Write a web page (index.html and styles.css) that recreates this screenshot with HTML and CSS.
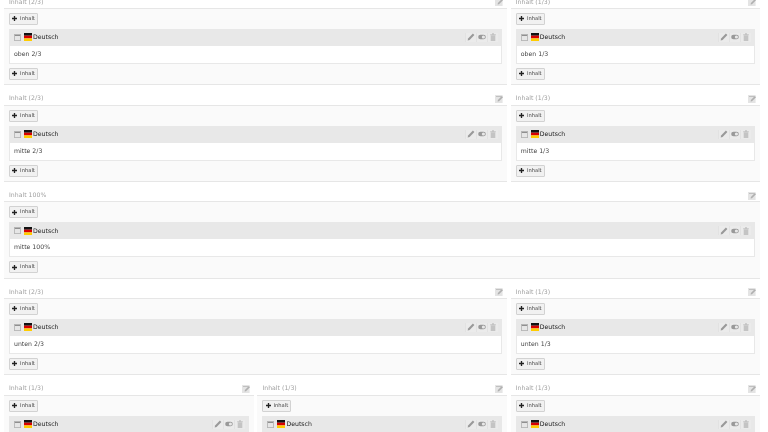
FILE: index.html
```html
<!DOCTYPE html>
<html lang="de">
<head>
    <meta charset="UTF-8">
    <title>Seite</title>
    <link rel="stylesheet" href="styles.css">
</head>
<body>
    <svg class="defs" width="0" height="0">
        <symbol id="i-flag" viewBox="0 0 8 8"><rect width="8" height="2.7" fill="#111"/><rect y="2.7" width="8" height="2.7" fill="#d80000"/><rect y="5.4" width="8" height="2.6" fill="#fc0"/></symbol>
        <symbol id="i-page" viewBox="0 0 8 8"><rect x=".5" y=".5" width="7" height="7" fill="#e6e6e6" stroke="#b5b5b5"/><rect x="1" y="1" width="6" height="1.3" fill="#8f8f8f"/></symbol>
        <symbol id="i-plus" viewBox="0 0 6 6"><path d="M2.2 0h1.6v2.2H6v1.6H3.8V6H2.2V3.8H0V2.2h2.2z" fill="#222"/></symbol>
        <symbol id="i-edit" viewBox="0 0 8 8"><path d="M.6 7.4l.5-2L5.9.6l1.5 1.5-4.8 4.8z" fill="#999"/></symbol>
        <symbol id="i-hide" viewBox="0 0 8 8"><rect x=".2" y="1.7" width="7.6" height="4.6" rx="2.3" fill="#999"/><circle cx="5.4" cy="4" r="1.6" fill="#e8e8e8"/></symbol>
        <symbol id="i-trash" viewBox="0 0 8 8"><path d="M1.2 1.2h5.6v1H1.2zM3 .2h2v1H3zM1.7 2.6h4.6V8H1.7z" fill="#c4c4c4"/></symbol>
        <symbol id="i-col" viewBox="0 0 8 8"><path d="M0 0h7.6v8H0z" fill="#e4e4e4"/><path d="M1 1h5.4v1H1z" fill="#c0c0c0"/><path d="M2.6 6.4l.3-1.3L6.9 1 8 2.2 4 6.2z" fill="#b0b0b0"/></symbol>
    </svg>

    <div class="page">
        <section class="col span-2">
            <header class="col-head"><span>Inhalt (2/3)</span><svg class="col-icon"><use href="#i-col"/></svg></header>
            <div class="panel">
                <button class="add"><svg><use href="#i-plus"/></svg>Inhalt</button>
                <article class="el">
                    <div class="el-head">
                        <svg class="page-icon"><use href="#i-page"/></svg>
                        <svg class="flag"><use href="#i-flag"/></svg>
                        <span class="lang">Deutsch</span>
                        <div class="actions"><span><svg><use href="#i-edit"/></svg></span><span><svg><use href="#i-hide"/></svg></span><span><svg><use href="#i-trash"/></svg></span></div>
                    </div>
                    <div class="el-body">oben 2/3</div>
                </article>
                <button class="add"><svg><use href="#i-plus"/></svg>Inhalt</button>
            </div>
        </section>
        <section class="col">
            <header class="col-head"><span>Inhalt (1/3)</span><svg class="col-icon"><use href="#i-col"/></svg></header>
            <div class="panel">
                <button class="add"><svg><use href="#i-plus"/></svg>Inhalt</button>
                <article class="el">
                    <div class="el-head">
                        <svg class="page-icon"><use href="#i-page"/></svg>
                        <svg class="flag"><use href="#i-flag"/></svg>
                        <span class="lang">Deutsch</span>
                        <div class="actions"><span><svg><use href="#i-edit"/></svg></span><span><svg><use href="#i-hide"/></svg></span><span><svg><use href="#i-trash"/></svg></span></div>
                    </div>
                    <div class="el-body">oben 1/3</div>
                </article>
                <button class="add"><svg><use href="#i-plus"/></svg>Inhalt</button>
            </div>
        </section>

        <section class="col span-2">
            <header class="col-head"><span>Inhalt (2/3)</span><svg class="col-icon"><use href="#i-col"/></svg></header>
            <div class="panel">
                <button class="add"><svg><use href="#i-plus"/></svg>Inhalt</button>
                <article class="el">
                    <div class="el-head">
                        <svg class="page-icon"><use href="#i-page"/></svg>
                        <svg class="flag"><use href="#i-flag"/></svg>
                        <span class="lang">Deutsch</span>
                        <div class="actions"><span><svg><use href="#i-edit"/></svg></span><span><svg><use href="#i-hide"/></svg></span><span><svg><use href="#i-trash"/></svg></span></div>
                    </div>
                    <div class="el-body">mitte 2/3</div>
                </article>
                <button class="add"><svg><use href="#i-plus"/></svg>Inhalt</button>
            </div>
        </section>
        <section class="col">
            <header class="col-head"><span>Inhalt (1/3)</span><svg class="col-icon"><use href="#i-col"/></svg></header>
            <div class="panel">
                <button class="add"><svg><use href="#i-plus"/></svg>Inhalt</button>
                <article class="el">
                    <div class="el-head">
                        <svg class="page-icon"><use href="#i-page"/></svg>
                        <svg class="flag"><use href="#i-flag"/></svg>
                        <span class="lang">Deutsch</span>
                        <div class="actions"><span><svg><use href="#i-edit"/></svg></span><span><svg><use href="#i-hide"/></svg></span><span><svg><use href="#i-trash"/></svg></span></div>
                    </div>
                    <div class="el-body">mitte 1/3</div>
                </article>
                <button class="add"><svg><use href="#i-plus"/></svg>Inhalt</button>
            </div>
        </section>

        <section class="col span-3">
            <header class="col-head"><span>Inhalt 100%</span><svg class="col-icon"><use href="#i-col"/></svg></header>
            <div class="panel">
                <button class="add"><svg><use href="#i-plus"/></svg>Inhalt</button>
                <article class="el">
                    <div class="el-head">
                        <svg class="page-icon"><use href="#i-page"/></svg>
                        <svg class="flag"><use href="#i-flag"/></svg>
                        <span class="lang">Deutsch</span>
                        <div class="actions"><span><svg><use href="#i-edit"/></svg></span><span><svg><use href="#i-hide"/></svg></span><span><svg><use href="#i-trash"/></svg></span></div>
                    </div>
                    <div class="el-body">mitte 100%</div>
                </article>
                <button class="add"><svg><use href="#i-plus"/></svg>Inhalt</button>
            </div>
        </section>

        <section class="col span-2">
            <header class="col-head"><span>Inhalt (2/3)</span><svg class="col-icon"><use href="#i-col"/></svg></header>
            <div class="panel">
                <button class="add"><svg><use href="#i-plus"/></svg>Inhalt</button>
                <article class="el">
                    <div class="el-head">
                        <svg class="page-icon"><use href="#i-page"/></svg>
                        <svg class="flag"><use href="#i-flag"/></svg>
                        <span class="lang">Deutsch</span>
                        <div class="actions"><span><svg><use href="#i-edit"/></svg></span><span><svg><use href="#i-hide"/></svg></span><span><svg><use href="#i-trash"/></svg></span></div>
                    </div>
                    <div class="el-body">unten 2/3</div>
                </article>
                <button class="add"><svg><use href="#i-plus"/></svg>Inhalt</button>
            </div>
        </section>
        <section class="col">
            <header class="col-head"><span>Inhalt (1/3)</span><svg class="col-icon"><use href="#i-col"/></svg></header>
            <div class="panel">
                <button class="add"><svg><use href="#i-plus"/></svg>Inhalt</button>
                <article class="el">
                    <div class="el-head">
                        <svg class="page-icon"><use href="#i-page"/></svg>
                        <svg class="flag"><use href="#i-flag"/></svg>
                        <span class="lang">Deutsch</span>
                        <div class="actions"><span><svg><use href="#i-edit"/></svg></span><span><svg><use href="#i-hide"/></svg></span><span><svg><use href="#i-trash"/></svg></span></div>
                    </div>
                    <div class="el-body">unten 1/3</div>
                </article>
                <button class="add"><svg><use href="#i-plus"/></svg>Inhalt</button>
            </div>
        </section>

        <section class="col">
            <header class="col-head"><span>Inhalt (1/3)</span><svg class="col-icon"><use href="#i-col"/></svg></header>
            <div class="panel">
                <button class="add"><svg><use href="#i-plus"/></svg>Inhalt</button>
                <article class="el">
                    <div class="el-head">
                        <svg class="page-icon"><use href="#i-page"/></svg>
                        <svg class="flag"><use href="#i-flag"/></svg>
                        <span class="lang">Deutsch</span>
                        <div class="actions"><span><svg><use href="#i-edit"/></svg></span><span><svg><use href="#i-hide"/></svg></span><span><svg><use href="#i-trash"/></svg></span></div>
                    </div>
                </article>
            </div>
        </section>
        <section class="col">
            <header class="col-head"><span>Inhalt (1/3)</span><svg class="col-icon"><use href="#i-col"/></svg></header>
            <div class="panel">
                <button class="add"><svg><use href="#i-plus"/></svg>Inhalt</button>
                <article class="el">
                    <div class="el-head">
                        <svg class="page-icon"><use href="#i-page"/></svg>
                        <svg class="flag"><use href="#i-flag"/></svg>
                        <span class="lang">Deutsch</span>
                        <div class="actions"><span><svg><use href="#i-edit"/></svg></span><span><svg><use href="#i-hide"/></svg></span><span><svg><use href="#i-trash"/></svg></span></div>
                    </div>
                </article>
            </div>
        </section>
        <section class="col">
            <header class="col-head"><span>Inhalt (1/3)</span><svg class="col-icon"><use href="#i-col"/></svg></header>
            <div class="panel">
                <button class="add"><svg><use href="#i-plus"/></svg>Inhalt</button>
                <article class="el">
                    <div class="el-head">
                        <svg class="page-icon"><use href="#i-page"/></svg>
                        <svg class="flag"><use href="#i-flag"/></svg>
                        <span class="lang">Deutsch</span>
                        <div class="actions"><span><svg><use href="#i-edit"/></svg></span><span><svg><use href="#i-hide"/></svg></span><span><svg><use href="#i-trash"/></svg></span></div>
                    </div>
                </article>
            </div>
        </section>
    </div>
</body>
</html>
```

FILE: styles.css
```css
html, body {
    margin: 0;
    height: 432px;
    overflow: hidden;
    background: #fff;
}

body {
    font-family: "DejaVu Sans", sans-serif;
    font-size: 6.2px;
    color: #333;
    text-rendering: geometricPrecision;
}

.defs {
    display: block;
}

/* the list is scrolled: first row's header is cut off by the top edge */
.page {
    display: grid;
    grid-template-columns: repeat(3, 249.6px);
    grid-auto-rows: 90.9px;
    gap: 5.8px 3.8px;
    margin: -5.6px 0 0 4px;
    filter: blur(0.3px);
}

.span-2 {
    grid-column: span 2;
}

.span-3 {
    grid-column: span 3;
}

.col {
    display: flex;
    flex-direction: column;
}

.col-head {
    display: flex;
    align-items: center;
    justify-content: space-between;
    height: 11.5px;
    padding: 2px 4px 0 5px;
    color: #a0a0a0;
    border-bottom: 1px solid #e6e6e6;
}

.col-icon {
    width: 8px;
    height: 8px;
}

.panel {
    display: flex;
    flex-direction: column;
    align-items: flex-start;
    gap: 4px;
    flex: 1;
    padding: 4px 5px;
    background: #fafafa;
    border-bottom: 1px solid #e6e6e6;
}

.add {
    display: flex;
    align-items: center;
    justify-content: center;
    gap: 3px;
    height: 12px;
    width: 29px;
    padding: 0;
    font: 5.2px "DejaVu Sans", sans-serif;
    text-rendering: geometricPrecision;
    color: #444;
    background: #f1f1f1;
    border: 1px solid #d2d2d2;
    border-radius: 1px;
}

.add svg {
    width: 5px;
    height: 5px;
}

.el {
    width: 100%;
    box-sizing: border-box;
    background: #fff;
    border: 1px solid #e8e8e8;
    border-top: 0;
}

.el-head {
    display: flex;
    align-items: center;
    height: 17px;
    padding: 0 4px 0 5px;
    margin: 0 -1px;
    background: #e8e8e8;
}

.page-icon {
    width: 7px;
    height: 7px;
    margin-right: 3px;
}

.flag {
    width: 8px;
    height: 8px;
    margin-right: 1px;
}

.lang {
    color: #222;
    padding-top: 1px;
}

.actions {
    display: flex;
    margin-left: auto;
}

.actions span {
    display: flex;
    align-items: center;
    justify-content: center;
    width: 10px;
    height: 9px;
    background: #ebebeb;
    border-left: 1px solid #e2e2e2;
}

.actions svg {
    width: 8px;
    height: 8px;
}

.el-body {
    height: 17px;
    line-height: 18.5px;
    padding-left: 4px;
    color: #444;
}
```
